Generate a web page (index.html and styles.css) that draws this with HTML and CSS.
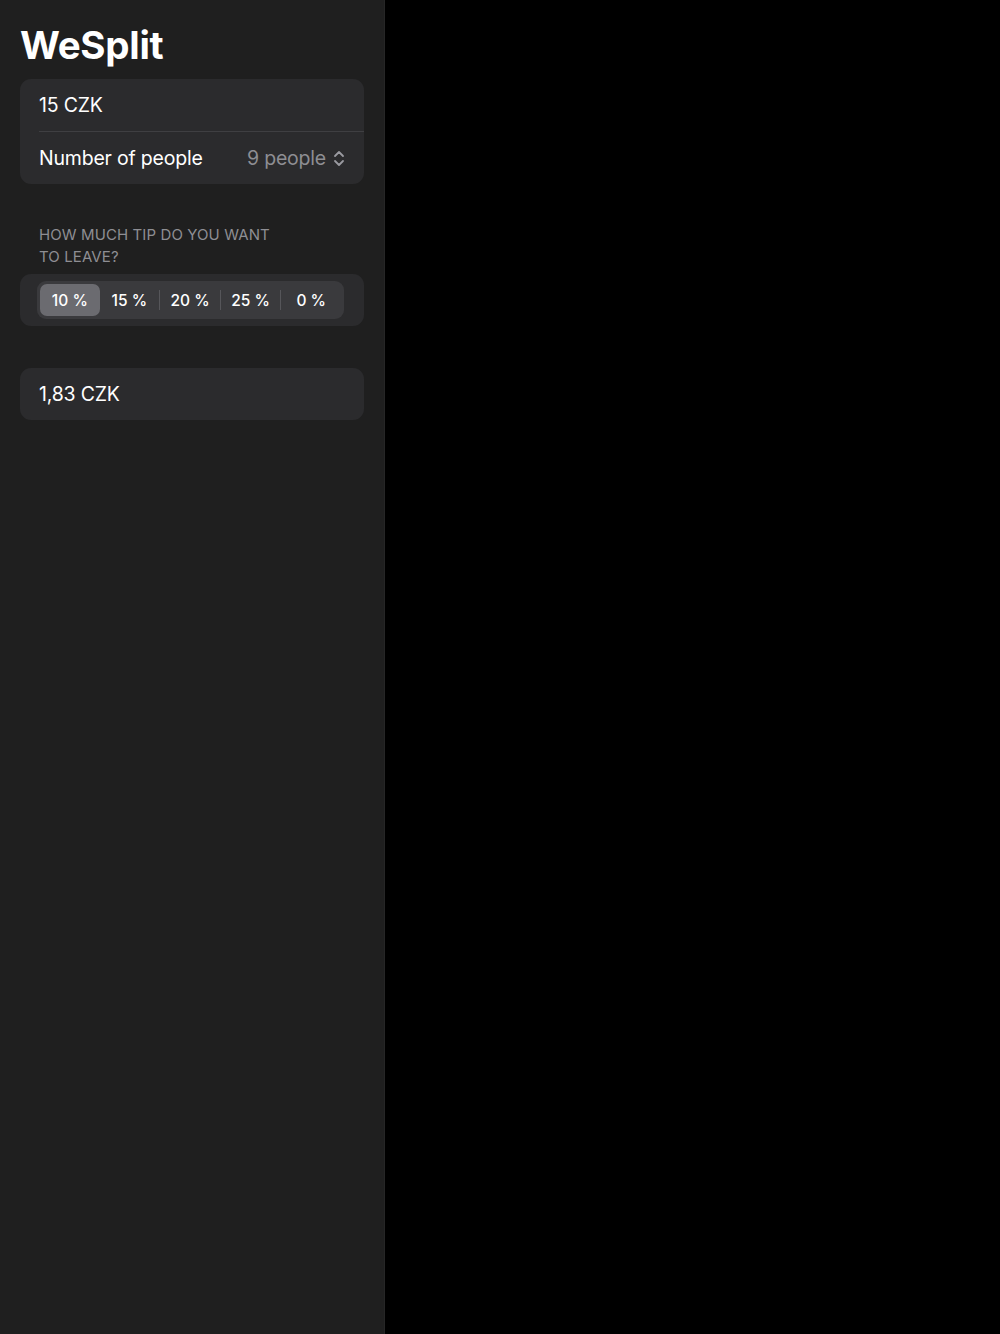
FILE: index.html
```html
<!DOCTYPE html>
<html>
<head>
<meta charset="utf-8">
<link rel="stylesheet" href="styles.css">
</head>
<body>
<div class="app">
  <aside class="sidebar">
    <h1 class="title">WeSplit</h1>
    <section class="card">
      <div class="row">15 CZK</div>
      <div class="divider"></div>
      <div class="row picker-row">
        <span>Number of people</span>
        <span class="picker-value">9 people
          <svg class="chev" width="12" height="17" viewBox="0 0 12 17" fill="none" stroke="currentColor" stroke-width="1.8" stroke-linecap="round" stroke-linejoin="round"><path d="M2 6 L6 2 L10 6"/><path d="M2 11 L6 15 L10 11"/></svg>
        </span>
      </div>
    </section>
    <div class="section-header">HOW MUCH TIP DO YOU WANT<br>TO LEAVE?</div>
    <section class="card seg-card">
      <div class="segmented">
        <div class="seg selected">10 %</div>
        <div class="seg">15 %</div>
        <div class="sep"></div>
        <div class="seg">20 %</div>
        <div class="sep"></div>
        <div class="seg">25 %</div>
        <div class="sep"></div>
        <div class="seg">0 %</div>
      </div>
    </section>
    <section class="card result-card">
      <div class="row">1,83 CZK</div>
    </section>
  </aside>
  <main class="detail"></main>
</div>
</body>
</html>
```

FILE: styles.css
```css
* { box-sizing: border-box; }
html, body {
  margin: 0;
  padding: 0;
  height: 100%;
  background: #000;
}
body {
  font-family: Inter, "Noto Sans", sans-serif;
  color: #fff;
}
.app {
  display: flex;
  height: 1334px;
}
.sidebar {
  width: 385px;
  background: #1f1f1f;
  padding: 0 20px;
  border-right: 1px solid #262626;
}
.detail {
  flex: 1;
  background: #000;
}
.title {
  margin: 0;
  padding-top: 22px;
  font-size: 38.5px;
  font-weight: 700;
  letter-spacing: -0.3px;
  line-height: 46px;
  height: 79px;
}
.card {
  background: #2b2b2d;
  border-radius: 11px;
  overflow: hidden;
}
.row {
  height: 52px;
  padding: 0 19px;
  display: flex;
  align-items: center;
  font-size: 19.5px;
  letter-spacing: -0.2px;
}
.divider {
  height: 1px;
  background: #3f3f42;
  margin-left: 19px;
}
.picker-row {
  justify-content: space-between;
}
.picker-value {
  color: #8e8e93;
  display: flex;
  align-items: center;
  gap: 7px;
}
.chev {
  color: #9a9aa0;
}
.section-header {
  margin-top: 40px;
  padding: 0 19px;
  font-size: 15px;
  line-height: 22px;
  color: #8e8e93;
  letter-spacing: 0.1px;
}
.seg-card {
  margin-top: 6px;
  padding: 7px 20px 7px 17px;
  height: 52px;
}
.segmented {
  display: flex;
  align-items: center;
  height: 38px;
  background: #3a3a3d;
  border-radius: 9px;
  padding: 3px;
}
.seg {
  flex: 1;
  height: 32px;
  display: flex;
  align-items: center;
  justify-content: center;
  font-size: 15.5px;
  font-weight: 450;
  color: #fff;
  border-radius: 7px;
}
.seg.selected {
  background: #6b6b70;
}
.sep {
  width: 1px;
  height: 20px;
  background: #56565a;
}
.result-card {
  margin-top: 42px;
}
```
